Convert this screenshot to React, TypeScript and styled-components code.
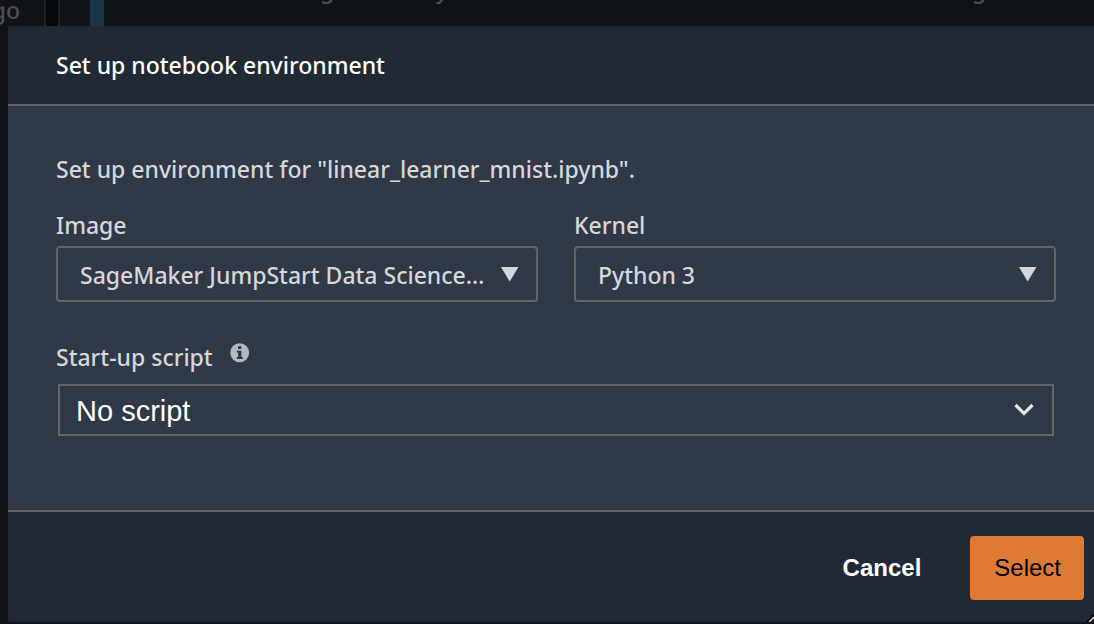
import React from "react";
import styled, { createGlobalStyle } from "styled-components";

const GlobalStyle = createGlobalStyle`
  * { box-sizing: border-box; }
  html { background: #111418; }
  body {
    margin: 0;
    overflow: hidden;
    font-family: "Noto Sans", "Open Sans", sans-serif;
    font-size: 23px;
    font-weight: 500;
    line-height: 32px;
    color: #d5d7da;
  }
`;

const Page = styled.div`
  display: flex;
  flex-direction: column;
  min-height: 100vh;
`;

const Backdrop = styled.div`
  display: flex;
  height: 26px;
  overflow: hidden;
  background: #101317;
  color: #4e5052;
`;

const SidebarText = styled.span`
  flex: none;
  display: flex;
  justify-content: flex-end;
  width: 20px;
  margin-right: 24px;
  line-height: 20px;
`;

const Gutter = styled.span`
  width: 16px;
  background: #070809;
  border: solid #1e1f20;
  border-width: 0 2px;
`;

const CellMarker = styled.span`
  width: 14px;
  margin-left: 30px;
  background: #1a3645;
`;

const CodeLine = styled.span`
  flex: 1;
  display: grid;
  grid-template-columns: 116px 536px 1fr;
  padding-left: 216px;
  margin-top: -27px;
  line-height: 32px;
`;

const Dialog = styled.section`
  flex: 1;
  display: flex;
  flex-direction: column;
  margin: 0 0 2px 8px;
  border-radius: 4px 0 0 4px;
  overflow: hidden;
  background: #303948;
`;

const Header = styled.header`
  padding: 23px 48px;
  background: #212a34;
  border-bottom: 2px solid #666464;
`;

const Title = styled.h1`
  margin: 0;
  font-size: 23px;
  font-weight: 500;
  line-height: 32px;
  color: #ffffff;
`;

const Content = styled.div`
  flex: 1;
  padding: 47px 38px 74px 48px;
`;

const Intro = styled.p`
  margin: 0 0 24px;
`;

const Columns = styled.div`
  display: grid;
  grid-template-columns: 1fr 1fr;
  gap: 36px;
  margin-bottom: 39px;
`;

const Field = styled.div`
  display: flex;
  flex-direction: column;
  gap: 5px;
  min-width: 0;
`;

const LabelRow = styled.div`
  display: flex;
  gap: 17px;
`;

const SelectBox = styled.div`
  display: grid;
  align-items: center;

  > * { grid-area: 1 / 1; }

  > svg {
    justify-self: end;
    margin-right: 18px;
    pointer-events: none;
  }
`;

const Select = styled.select`
  appearance: none;
  width: 100%;
  min-width: 0;
  height: 56px;
  padding: 2px 40px 0 22px;
  border: 2px solid #666464;
  border-radius: 4px;
  background: transparent;
  color: inherit;
  font: inherit;
`;

const ScriptBox = styled(SelectBox)`
  margin: 6px 2px 0;

  > svg { margin-right: 20px; }
`;

const ScriptSelect = styled(Select)`
  height: 52px;
  padding-left: 16px;
  border-radius: 0;
  color: #ffffff;
  font-family: "Liberation Sans", Arial, sans-serif;
  font-size: 29px;
  font-weight: 400;
`;

const InfoButton = styled.button`
  display: flex;
  align-self: flex-start;
  margin-top: 2px;
  padding: 0;
  border: 0;
  background: none;
`;

const Footer = styled.footer`
  position: relative;
  display: flex;
  justify-content: flex-end;
  gap: 24px;
  padding: 24px 10px 22px;
  background: #212a34;
  border-top: 2px solid #666464;
`;

const Button = styled.button<{ $primary?: boolean }>`
  height: 64px;
  padding: 0 ${(p) => (p.$primary ? 23 : 25)}px 0 24px;
  border: 0;
  border-radius: 4px;
  background: ${(p) => (p.$primary ? "#de7a32" : "transparent")};
  color: ${(p) => (p.$primary ? "#000000" : "#ffffff")};
  font-family: "Liberation Sans", Arial, sans-serif;
  font-size: 24px;
  font-weight: ${(p) => (p.$primary ? 400 : 700)};
`;

const ResizeGrip = styled.svg`
  position: absolute;
  right: 0;
  bottom: 0;
`;

const Triangle = () => (
  <svg width="20" height="16" viewBox="0 0 20 16" aria-hidden="true">
    <path d="M1 1h17.5L9.7 15.4z" fill="#d5d7da" />
  </svg>
);

const Chevron = () => (
  <svg width="20" height="14" viewBox="0 0 20 14" aria-hidden="true">
    <path d="M1.5 2l8.5 8.5L18.5 2" fill="none" stroke="#e4e4e4" strokeWidth="3.2" />
  </svg>
);

const InfoIcon = () => (
  <svg width="20" height="20" viewBox="0 0 20 20" aria-hidden="true">
    <circle cx="9.7" cy="9.7" r="9.5" fill="#b5b9be" />
    <path d="M8 3.3h3.4v2.8H8zM6.8 7.7h4.6v6.4h1.3V16H6.8v-1.9H8V9.6H6.8z" fill="#303948" />
  </svg>
);

export default function App() {
  return (
    <Page>
      <GlobalStyle />
      <Backdrop aria-hidden="true">
        <SidebarText>go</SidebarText>
        <Gutter />
        <CellMarker />
        <CodeLine>
          <span>g</span>
          <span>y</span>
          <span>g</span>
        </CodeLine>
      </Backdrop>
      <Dialog role="dialog" aria-labelledby="dialog-title">
        <Header>
          <Title id="dialog-title">Set up notebook environment</Title>
        </Header>
        <Content>
          <Intro>Set up environment for "linear_learner_mnist.ipynb".</Intro>
          <Columns>
            <Field>
              <label htmlFor="image">Image</label>
              <SelectBox>
                <Select id="image">
                  <option>SageMaker JumpStart Data Science…</option>
                </Select>
                <Triangle />
              </SelectBox>
            </Field>
            <Field>
              <label htmlFor="kernel">Kernel</label>
              <SelectBox>
                <Select id="kernel">
                  <option>Python 3</option>
                </Select>
                <Triangle />
              </SelectBox>
            </Field>
          </Columns>
          <Field>
            <LabelRow>
              <label htmlFor="script">Start-up script</label>
              <InfoButton type="button" aria-label="About start-up scripts">
                <InfoIcon />
              </InfoButton>
            </LabelRow>
            <ScriptBox>
              <ScriptSelect id="script">
                <option>No script</option>
              </ScriptSelect>
              <Chevron />
            </ScriptBox>
          </Field>
        </Content>
        <Footer>
          <Button type="button">Cancel</Button>
          <Button type="button" $primary>Select</Button>
          <ResizeGrip width="8" height="8" viewBox="0 0 8 8" aria-hidden="true">
            <path d="M1 8L8 1" stroke="#000000" strokeWidth="2" />
            <path d="M3 8L8 3" stroke="#d5d7da" strokeWidth="1.5" />
          </ResizeGrip>
        </Footer>
      </Dialog>
    </Page>
  );
}
